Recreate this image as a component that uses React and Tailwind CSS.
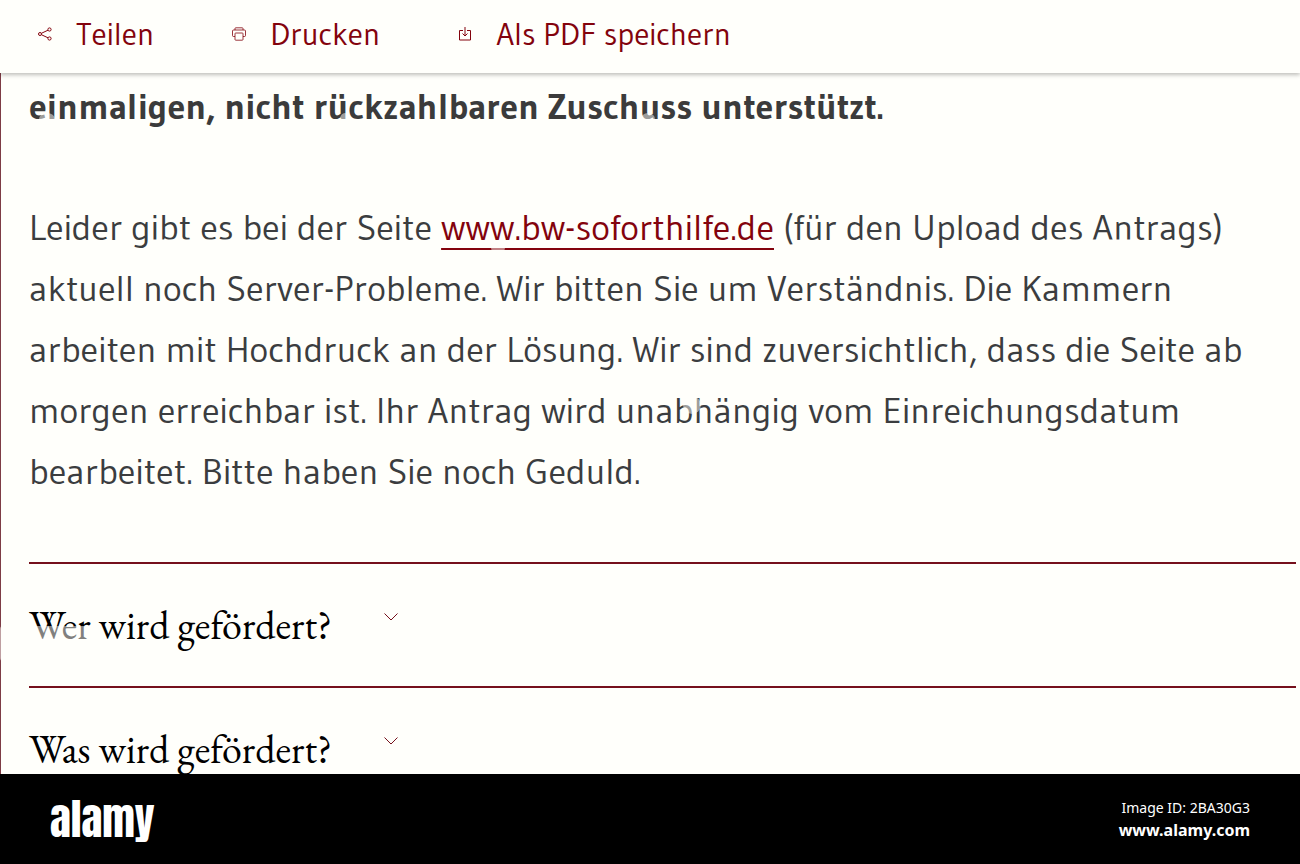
const actions = [
  { label: 'Teilen', icon: ShareIcon },
  { label: 'Drucken', icon: PrintIcon },
  { label: 'Als PDF speichern', icon: SaveIcon },
];

const questions = ['Wer wird gefördert?', 'Was wird gefördert?'];

function ShareIcon() {
  return (
    <svg width="14" height="14" viewBox="0 0 14 14" fill="none" stroke="currentColor" aria-hidden="true">
      <circle cx="2" cy="7" r="1.5" />
      <circle cx="11.5" cy="2.5" r="1.6" />
      <circle cx="11.5" cy="11.5" r="1.6" />
      <path d="M3.4 6.3 10 3.2M3.4 7.7 10 10.8" />
    </svg>
  );
}

function PrintIcon() {
  return (
    <svg width="14" height="14" viewBox="0 0 14 14" fill="none" stroke="currentColor" strokeWidth="0.8" aria-hidden="true">
      <path d="M3 3V1.5q0-.7.7-.7h6.6q.7 0 .7.7V3" />
      <path d="M3 9.5H1.5q-1 0-1-1V4q0-1 1-1h11q1 0 1 1v4.5q0 1-1 1H11" />
      <rect x="3" y="6" width="8" height="7.2" rx="0.7" />
    </svg>
  );
}

function SaveIcon() {
  return (
    <svg width="14" height="14" viewBox="0 0 14 14" fill="none" stroke="currentColor" aria-hidden="true">
      <path d="M5 3.5H1.5V13h11V3.5H9M7 0v9M4.5 6.5 7 9l2.5-2.5" />
    </svg>
  );
}

function ChevronIcon() {
  return (
    <svg className="mb-4 text-[#75101c]" width="14" height="8" viewBox="0 0 14 8" fill="none" stroke="currentColor" aria-hidden="true">
      <path d="M0.5 0.5 7 7 13.5 0.5" />
    </svg>
  );
}

// faint translucent stamps lying over the page
function Watermark() {
  return (
    <svg className="pointer-events-none absolute top-0 left-0 z-20" width="1300" height="774" fill="#fffffb" fillOpacity="0.5" aria-hidden="true">
      <rect x="0" y="626" width="90" height="35" rx="3" />
      <rect x="150" y="239" width="112" height="34" rx="3" />
      <rect x="1045" y="239" width="90" height="34" rx="3" />
      <ellipse cx="47" cy="119" rx="8" ry="6" />
      <ellipse cx="345" cy="119" rx="5" ry="6" />
      <ellipse cx="648" cy="119" rx="7" ry="6" />
      <ellipse cx="498" cy="248" rx="7" ry="5" />
      <ellipse cx="692" cy="405" rx="9" ry="9" />
    </svg>
  );
}

const App = () => {
  return (
    <div className="relative flex h-screen flex-col overflow-hidden bg-[#fffffb] font-['Gudea','Noto_Sans',sans-serif]">
      <header className="relative z-10 flex shrink-0 items-center gap-[78px] bg-[#fffffb] pr-8 pb-[5px] pl-[38px] shadow-[0_2px_4px_rgba(0,0,0,0.25)]">
        {actions.map(({ label, icon: Icon }) => (
          <button key={label} type="button" className="flex items-center gap-6 text-[31px] leading-[68px] text-[#83030d]">
            <Icon />
            {label}
          </button>
        ))}
      </header>

      <main className="min-h-0 flex-1 overflow-hidden border-l border-[#7d3c45] pr-1 pl-7">
        <p className="pt-1 text-[36px] leading-[60px] font-bold text-[#3b3b3b]">
          einmaligen, nicht rückzahlbaren Zuschuss unterstützt.
        </p>
        <p className="mt-[60px] text-[36px] leading-[61px] text-[#3b3d3f]">
          Leider gibt es bei der Seite{' '}
          <a href="#upload" className="text-[#83030d] underline decoration-2 underline-offset-8 [text-decoration-skip-ink:none]">
            www.bw-soforthilfe.de
          </a>{' '}
          (für den Upload des Antrags) aktuell noch Server-Probleme. Wir bitten Sie um Verständnis. Die Kammern
          arbeiten mit Hochdruck an der Lösung. Wir sind zuversichtlich, dass die Seite ab morgen erreichbar ist.
          Ihr Antrag wird unabhängig vom Einreichungsdatum bearbeitet. Bitte haben Sie noch Geduld.
        </p>
        <section className="mt-[60px]">
          {questions.map((question) => (
            <h2 key={question} className="border-t-2 border-[#75101c]">
              <button type="button" className="flex h-[122px] items-center gap-[52px] font-['EB_Garamond','Liberation_Serif',serif] text-[40px] text-black">
                {question}
                <ChevronIcon />
              </button>
            </h2>
          ))}
        </section>
      </main>

      <Watermark />

      <footer className="flex h-[90px] shrink-0 items-center justify-between bg-black px-[50px] text-white">
        <span className="font-['Anton','Liberation_Sans',sans-serif] text-[43px] leading-[60px]">alamy</span>
        <div className="text-right font-['Noto_Sans',sans-serif] leading-[22px]">
          <p className="text-[14px]">Image ID: 2BA30G3</p>
          <p className="text-[16px] font-bold">www.alamy.com</p>
        </div>
      </footer>
    </div>
  );
};

export default App;
